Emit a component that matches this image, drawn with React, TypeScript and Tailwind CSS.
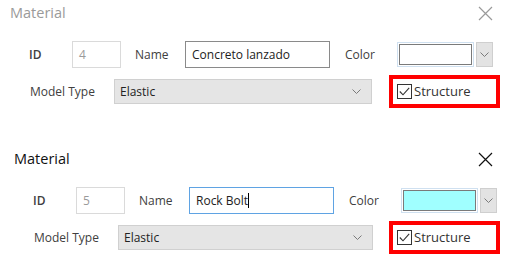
const Chevron = () => (
  <svg width="9" height="6" viewBox="0 0 9 6" fill="none" stroke="#7a7a7a" strokeWidth="1">
    <path d="M0.5 0.5l4 4 4-4" />
  </svg>
)

const CloseIcon = ({ color }: { color: string }) => (
  <svg width="15" height="15" viewBox="0 0 15 15" fill="none" stroke={color} strokeWidth="1.2">
    <path d="M1 1l13 13M14 1L1 14" />
  </svg>
)

const CheckBox = () => (
  <div className="w-[15px] h-[15px] shrink-0 border border-[#333] bg-white flex items-center justify-center">
    <svg width="11" height="9" viewBox="0 0 11 9" fill="none" stroke="#333" strokeWidth="1.1">
      <path d="M0.8 4.5l3.2 3.3L10.2 0.8" />
    </svg>
  </div>
)

interface DialogProps {
  active: boolean
  id: string
  name: string
  swatch: string
  shift: string
}

const Dialog = ({ active, id, name, swatch, shift }: DialogProps) => (
  <div className="flex flex-col">
    {/* title bar */}
    <div className="h-[26px] flex items-center justify-between pr-[19px]">
      <span className={`${shift} text-[14.5px] ${active ? 'text-[#111]' : 'text-[#9a9a9a]'}`}>Material</span>
      <CloseIcon color={active ? '#111' : '#9a9a9a'} />
    </div>

    {/* ID / Name / Color */}
    <div className={`mt-[15px] h-[27px] flex items-center ${shift} text-[12px] text-[#404040]`}>
      <span className="w-[62px] shrink-0 pl-[19px] font-semibold">ID</span>
      <div className="w-[49px] h-[27px] shrink-0 border border-[#dadada] bg-white text-[#9a9a9a] pl-[6px] flex items-center">{id}</div>
      <span className="ml-[14px] w-[50px] shrink-0">Name</span>
      <div className={`w-[145px] h-[27px] shrink-0 border ${active ? 'border-[#5fa3e3]' : 'border-[#8a8a8a]'} bg-white text-[#222] pl-[6px] flex items-center`}>
        {name}
        {active && <span className="w-px h-[15px] bg-black" />}
      </div>
      <span className="ml-[15px] w-[52px] shrink-0">Color</span>
      <div className="w-[77px] h-[25px] shrink-0 border border-[#cfe0f0] p-px">
        <div className="w-full h-full border border-[#7a7a7a]" style={{ background: swatch }} />
      </div>
      <div className="ml-[2px] w-[17px] h-[25px] shrink-0 border border-[#cfcfcf] bg-[#e3e3e3] flex items-center justify-center">
        <Chevron />
      </div>
    </div>

    {/* Model Type / Structure */}
    <div className="mt-[7px] h-[33px] flex items-center text-[12px] text-[#404040]">
      <div className={`${shift} flex items-center shrink-0`}>
        <span className="w-[104px] shrink-0 pl-[20px] whitespace-nowrap">Model Type</span>
        <div className={`${active ? 'w-[255px]' : 'w-[258px]'} h-[25px] border border-[#d0d0d0] bg-[#e5e5e5] pl-[5px] pr-[10px] flex items-center justify-between text-[#222]`}>
          <span>Elastic</span>
          <Chevron />
        </div>
      </div>
      <div className={`${active ? 'ml-[16px]' : 'ml-[17px]'} w-[111px] h-[33px] shrink-0 border-4 border-[#ff0000] bg-white flex items-center gap-[2px] pl-[4px]`}>
        <CheckBox />
        <span className="text-[13px] text-[#333]">Structure</span>
      </div>
    </div>
  </div>
)

export default function App() {
  return (
    <div className="w-[512px] h-[261px] bg-white overflow-hidden" style={{ fontFamily: '"Open Sans", "Noto Sans", sans-serif' }}>
      <div className="h-[146px]">
        <Dialog active={false} id="4" name="Concreto lanzado" swatch="#ffffff" shift="pl-[10px]" />
      </div>
      <div>
        <Dialog active id="5" name="Rock Bolt" swatch="#a0ffff" shift="pl-[14px]" />
      </div>
    </div>
  )
}
